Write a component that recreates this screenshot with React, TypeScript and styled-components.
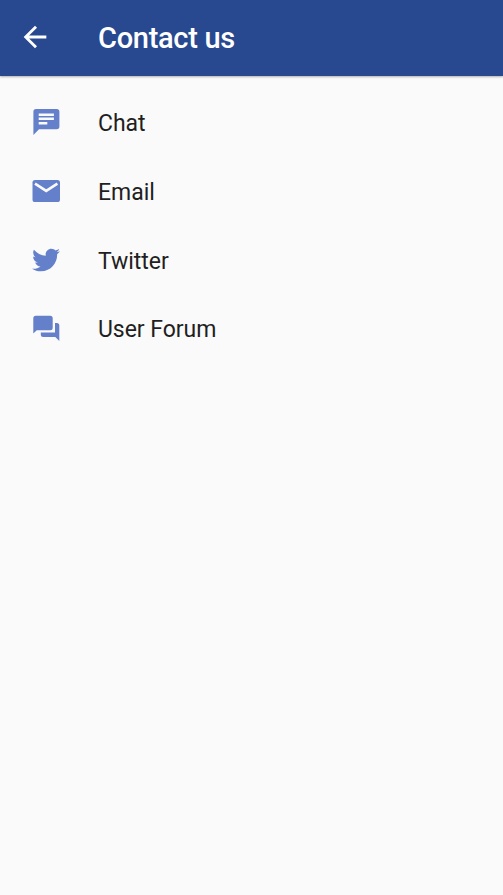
import React from "react";
import styled, { createGlobalStyle } from "styled-components";
import { MdArrowBack } from "react-icons/md";
import { FaTwitter } from "react-icons/fa";

const GlobalStyle = createGlobalStyle`
  * { box-sizing: border-box; }
  body { margin: 0; background: #fafafa; font-family: Roboto, sans-serif; }
`;

const Screen = styled.div`
  display: flex;
  flex-direction: column;
  width: 100%;
  height: 895px;
  background: #fafafa;
`;

const AppBar = styled.header`
  display: flex;
  align-items: center;
  flex: none;
  height: 76px;
  padding: 0 18px;
  color: #fff;
  background: #28498f;
  box-shadow: 0 1px 2px rgba(0, 0, 0, 0.3);
`;

const BackButton = styled.button`
  display: flex;
  flex: none;
  width: 80px;
  padding: 0;
  border: 0;
  color: inherit;
  background: none;
  margin-top: -3px;
`;

const Title = styled.h1`
  margin: 0;
  font-size: 29px;
  line-height: 34px;
  font-weight: 500;
  letter-spacing: -0.3px;
`;

const List = styled.ul`
  display: flex;
  flex-direction: column;
  margin: 0;
  padding: 12px 0 0;
  list-style: none;
`;

const Item = styled.li`
  display: flex;
  align-items: center;
  height: 68.7px;
  padding-left: 32px;
`;

const IconSlot = styled.span`
  display: flex;
  flex: none;
  width: 66px;
  color: #6580ca;
`;

const Label = styled.span`
  padding-top: 4px;
  font-size: 23px;
  line-height: 28px;
  letter-spacing: -0.04px;
  color: #1f1f1f;
`;

const Glyph = styled.svg`
  width: 28px;
  height: 28px;
  fill: currentColor;
`;

const ChatIcon = () => (
  <Glyph viewBox="0 -0.4 28 28">
    <path d="M4 .7h20.7a2.7 2.7 0 0 1 2.7 2.7v14.8a2.7 2.7 0 0 1-2.7 2.7H7l-5.6 5.6V3.4A2.7 2.7 0 0 1 4 .7Z" />
    <path fill="#fafafa" d="M6.7 5h15.2v2.5H6.7zM6.7 9.2h15.2v2.5H6.7zM6.7 13.5h8.6V16H6.7z" />
  </Glyph>
);

const EmailIcon = () => (
  <Glyph viewBox="0 0 28 28">
    <rect x=".5" y="3" width="27.5" height="22" rx="2.6" />
    <path d="m3 6.6 11.2 7.3 11.2-7.3" fill="none" stroke="#fafafa" strokeWidth="2.6" />
  </Glyph>
);

const ForumIcon = () => (
  <Glyph viewBox="0 -0.4 28 28">
    <path d="M3.8 1.4h14.4a2.5 2.5 0 0 1 2.5 2.5v9.4a2.5 2.5 0 0 1-2.5 2.5H4.8l-3.5 3.4V3.9a2.5 2.5 0 0 1 2.5-2.5Z" />
    <path d="M23 8.5h1.8a2.5 2.5 0 0 1 2.5 2.5v15.5l-4-4H11.3A2.5 2.5 0 0 1 8.8 20v-1.8H23Z" />
  </Glyph>
);

const TwitterIcon = styled(FaTwitter)`
  width: 28px;
  height: 28px;
`;

const contacts = [
  { label: "Chat", Icon: ChatIcon },
  { label: "Email", Icon: EmailIcon },
  { label: "Twitter", Icon: TwitterIcon },
  { label: "User Forum", Icon: ForumIcon },
];

export default function App() {
  return (
    <Screen>
      <GlobalStyle />
      <AppBar>
        <BackButton aria-label="Back"><MdArrowBack size={34} /></BackButton>
        <Title>Contact us</Title>
      </AppBar>
      <List>
        {contacts.map(({ label, Icon }) => (
          <Item key={label}>
            <IconSlot><Icon /></IconSlot>
            <Label>{label}</Label>
          </Item>
        ))}
      </List>
    </Screen>
  );
}
